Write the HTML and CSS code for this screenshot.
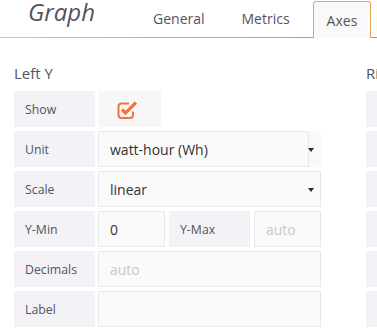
FILE: index.html
```html
<!DOCTYPE html>
<html lang="en">
<head>
    <meta charset="UTF-8">
    <meta name="viewport" content="width=device-width, initial-scale=1.0">
    <title>Graph - Axes</title>
    <link rel="stylesheet" href="styles.css">
</head>
<body>
    <div class="header">
        <div class="title">Graph</div>
        <div class="tabs">
            <div class="tab">General</div>
            <div class="tab">Metrics</div>
            <div class="tab active">Axes</div>
        </div>
    </div>

    <div class="panel">
        <div class="section">
            <h5 class="section-title">Left Y</h5>
            <div class="row">
                <div class="label">Show</div>
                <div class="check-box">
                    <svg width="20" height="20" viewBox="0 0 20 20">
                        <path d="M12 3.5H4.5a3 3 0 0 0-3 3v8.5a3 3 0 0 0 3 3H13a3 3 0 0 0 3-3v-3.5" fill="none" stroke="#f4733a" stroke-width="2"/>
                        <path d="M5 9.5l3.5 3.5L19 2.5" fill="none" stroke="#f4733a" stroke-width="3.2" stroke-linejoin="miter"/>
                    </svg>
                </div>
            </div>
            <div class="row">
                <div class="label">Unit</div>
                <div class="select-wrap">
                    <div class="input unit-input">watt-hour (Wh)</div>
                    <span class="caret"></span>
                </div>
            </div>
            <div class="row">
                <div class="label">Scale</div>
                <div class="select-wrap">
                    <div class="input wide">linear</div>
                    <span class="caret"></span>
                </div>
            </div>
            <div class="row">
                <div class="label">Y-Min</div>
                <div class="input small">0</div>
                <div class="label inline">Y-Max</div>
                <div class="input small placeholder">auto</div>
            </div>
            <div class="row">
                <div class="label">Decimals</div>
                <div class="input wide placeholder">auto</div>
            </div>
            <div class="row">
                <div class="label">Label</div>
                <div class="input wide"></div>
            </div>
        </div>

        <div class="section">
            <h5 class="section-title">Right Y</h5>
            <div class="row"><div class="label">Show</div></div>
            <div class="row"><div class="label">Unit</div></div>
            <div class="row"><div class="label">Scale</div></div>
            <div class="row"><div class="label">Y-Min</div></div>
            <div class="row"><div class="label">Decimals</div></div>
            <div class="row"><div class="label">Label</div></div>
        </div>
    </div>
</body>
</html>
```

FILE: styles.css
```css
body {
    margin: 0;
    width: 377px;
    height: 334px;
    overflow: hidden;
    background: #fff;
    color: #52545c;
    font-family: "Open Sans", "DejaVu Sans", sans-serif;
}
.header {
    display: flex;
    height: 38px;
    background: linear-gradient(90deg, #fbc531, #f1852b) left bottom / 100% 1px no-repeat;
}
.title {
    width: 139px;
    flex-shrink: 0;
    box-sizing: border-box;
    padding-left: 28px;
    font-size: 24px;
    font-style: italic;
    line-height: 24px;
}
.tabs {
    display: flex;
}
.tab {
    box-sizing: border-box;
    height: 37px;
    margin-top: 1px;
    margin-right: 9px;
    padding: 7px 13px 0;
    border: 1px solid transparent;
    border-bottom: 0;
    font-size: 14px;
    line-height: 20px;
}
.tab.active {
    padding-top: 9px;
    border-color: #eba553;
    border-radius: 3px 3px 0 0;
    background: #f9f9f9;
}
.panel {
    display: flex;
    gap: 45px;
    padding: 25px 0 0 14px;
}
.section {
    width: 307px;
    flex-shrink: 0;
}
.section-title {
    margin: 0 0 8px;
    font-size: 15px;
    font-weight: normal;
    line-height: 20px;
}
.row {
    display: flex;
    height: 36px;
    margin-bottom: 4px;
}
.label {
    width: 81px;
    flex-shrink: 0;
    box-sizing: border-box;
    margin-right: 3px;
    padding-left: 11px;
    display: flex;
    align-items: center;
    background: #f3f3f7;
    font-size: 12.3px;
}
.label.inline {
    margin-right: 4px;
}
.input {
    box-sizing: border-box;
    height: 36px;
    padding-left: 11px;
    display: flex;
    align-items: center;
    border: 1px solid #e8e8e8;
    background: #fafafa;
    color: #333;
    font-size: 14px;
}
.check-box {
    width: 63px;
    box-sizing: border-box;
    padding-left: 19px;
    display: flex;
    align-items: center;
    background: #f7f7f7;
}
.check-box svg {
    display: block;
    margin-top: 1px;
}
.select-wrap {
    position: relative;
    width: 223px;
    background: #f9f9f9;
}
.unit-input {
    width: 211px;
}
.wide {
    width: 223px;
}
.small {
    width: 67px;
    flex-shrink: 0;
    margin-right: 4px;
}
.placeholder {
    color: #c9c9c9;
}
.caret {
    position: absolute;
    top: 17px;
    left: 210px;
    border-top: 4px solid #2b2b2b;
    border-left: 3.5px solid transparent;
    border-right: 3.5px solid transparent;
}
```
